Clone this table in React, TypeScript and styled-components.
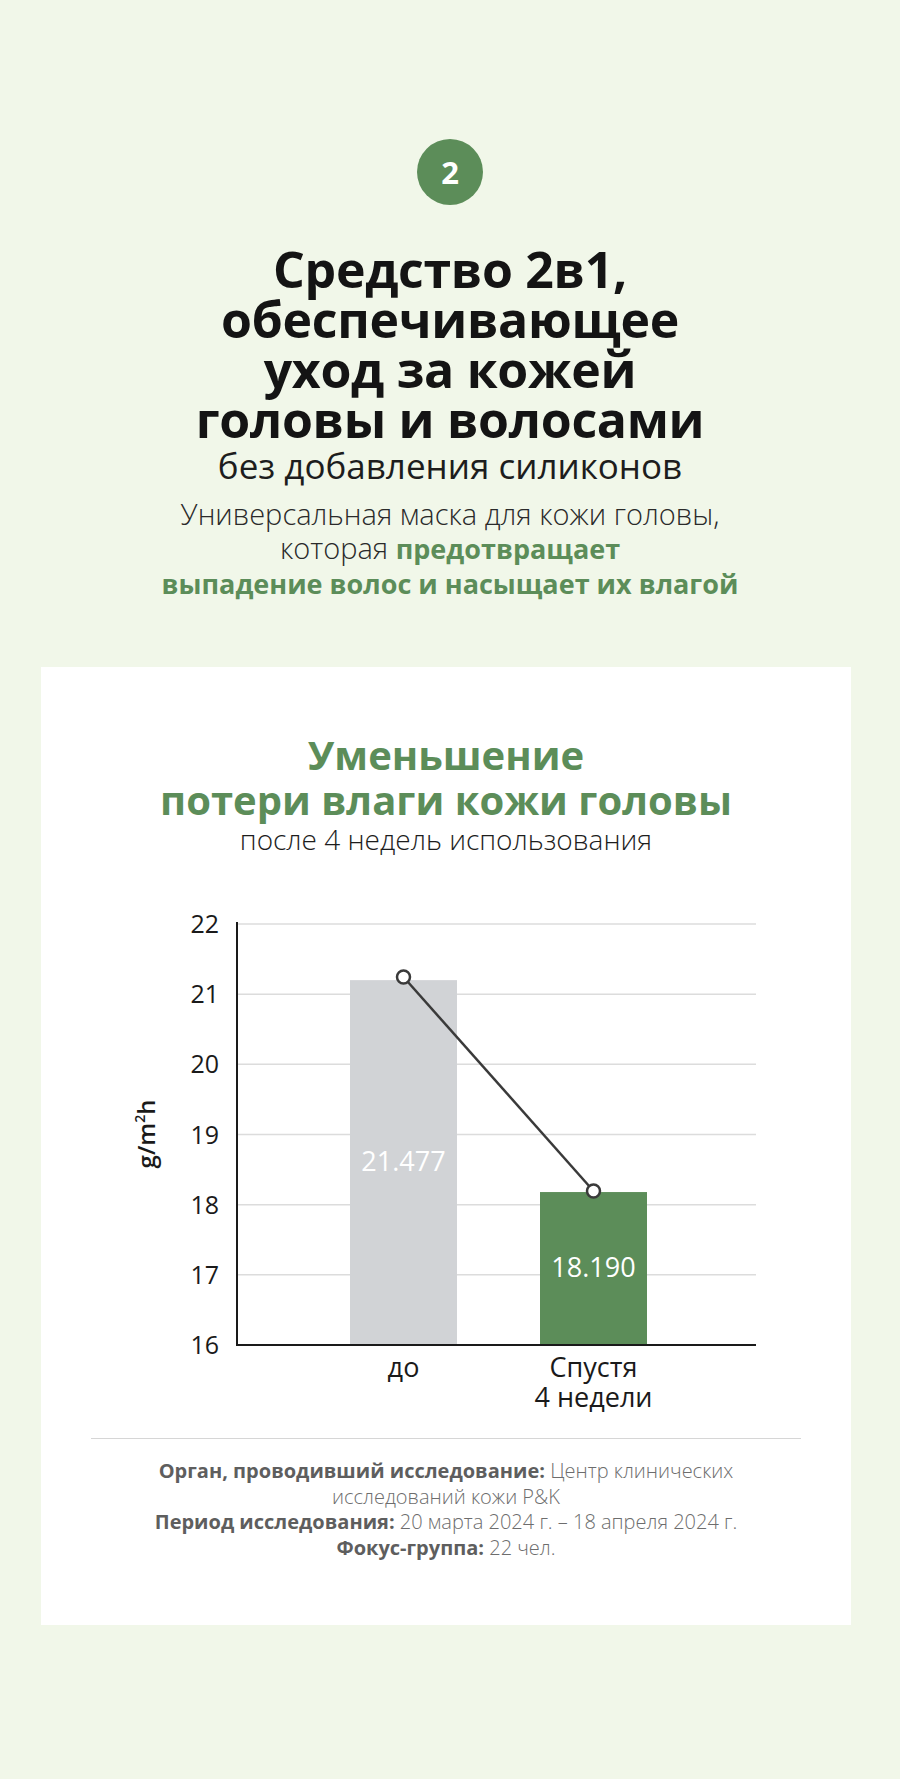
import styled, { createGlobalStyle } from "styled-components";

const GREEN = "#5c8d59";

const GlobalStyle = createGlobalStyle`
  html, body {
    margin: 0;
    padding: 0;
    background: #f1f7e9;
  }
  body {
    font-family: "Open Sans", "Noto Sans", sans-serif;
  }
`;

const Page = styled.div`
  width: 900px;
  min-height: 1779px;
  background: #f1f7e9;
  padding-top: 139px;
  box-sizing: border-box;
  display: flex;
  flex-direction: column;
`;

const Intro = styled.section`
  display: flex;
  flex-direction: column;
  align-items: center;
  text-align: center;
`;

const StepBadge = styled.div`
  width: 66px;
  height: 66px;
  border-radius: 50%;
  background: ${GREEN};
  color: #fff;
  font-weight: 700;
  font-size: 31px;
  display: flex;
  align-items: center;
  justify-content: center;
`;

const Title = styled.h1`
  margin: 39px 0 0;
  font-size: 50px;
  line-height: 50px;
  font-weight: 700;
  letter-spacing: -0.3px;
  color: #141414;
`;

const SubTitle = styled.div`
  margin-top: 2px;
  font-size: 35px;
  line-height: 40px;
  color: #1d1d1d;
`;

const Lead = styled.p`
  margin: 11px 0 0;
  font-size: 29px;
  line-height: 34px;
  font-weight: 300;
  color: #2a2a2a;
`;

const Accent = styled.b`
  font-size: 27px;
  color: ${GREEN};
  font-weight: 700;
`;

const Card = styled.section`
  margin: 66px 0 0 41px;
  width: 810px;
  background: #fff;
  padding: 65px 50px 64px;
  box-sizing: border-box;
  display: flex;
  flex-direction: column;
  align-items: center;
  text-align: center;
`;

const CardTitle = styled.h2`
  margin: 0;
  font-size: 40px;
  line-height: 45px;
  font-weight: 700;
  color: ${GREEN};
`;

const CardSub = styled.div`
  font-size: 28px;
  line-height: 34px;
  font-weight: 300;
  color: #1d1d1d;
`;

const Chart = styled.svg`
  display: block;
  margin-top: 43px;
  font-family: "Open Sans", "Noto Sans", sans-serif;
`;

const Divider = styled.hr`
  width: 100%;
  margin: 24px 0 0;
  border: none;
  border-top: 1.5px solid #d6d6d6;
`;

const Notes = styled.div`
  margin-top: 19px;
  font-size: 20px;
  line-height: 25.7px;
  font-weight: 300;
  color: #6d6d6d;
`;

const NoteKey = styled.b`
  font-weight: 700;
  color: #5e5e5e;
`;

const ticks = [22, 21, 20, 19, 18, 17, 16];
const TOP = 25;
const UNIT = 70.17;
const yOf = (v: number) => TOP + (22 - v) * UNIT;

const bars = [
  { x: 259, value: 21.2, label: "21.477", color: "#d1d3d6", labelY: 262 },
  { x: 449, value: 18.18, label: "18.190", color: GREEN, labelY: 368 },
];
const BAR_W = 107;

const MoistureChart = () => (
  <Chart width={710} height={515} viewBox="0 0 710 515">
    {ticks.map((t) => (
      <g key={t}>
        {t !== 16 && (
          <line x1={146} x2={665} y1={yOf(t)} y2={yOf(t)} stroke="#dcdcdc" strokeWidth={1.5} />
        )}
        <text x={128} y={yOf(t) + 9} textAnchor="end" fontSize={25} fill="#1a1a1a">
          {t}
        </text>
      </g>
    ))}
    {bars.map((b) => (
      <rect key={b.label} x={b.x} y={yOf(b.value)} width={BAR_W} height={yOf(16) - yOf(b.value)} fill={b.color} />
    ))}
    <line x1={146} y1={TOP - 2} x2={146} y2={yOf(16)} stroke="#1a1a1a" strokeWidth={2} />
    <line x1={145} y1={yOf(16)} x2={665} y2={yOf(16)} stroke="#1a1a1a" strokeWidth={2} />
    {bars.map((b) => (
      <text key={b.label} x={b.x + BAR_W / 2} y={b.labelY + 10} textAnchor="middle" fontSize={27} fill="#fff">
        {b.label}
      </text>
    ))}
    <line x1={312.5} y1={78} x2={502.5} y2={292} stroke="#3a3a3a" strokeWidth={2.5} />
    <circle cx={312.5} cy={78} r={6.5} fill="#fff" stroke="#3a3a3a" strokeWidth={2.5} />
    <circle cx={502.5} cy={292} r={6.5} fill="#fff" stroke="#3a3a3a" strokeWidth={2.5} />
    <text x={312.5} y={478} textAnchor="middle" fontSize={27} fill="#1a1a1a">
      до
    </text>
    <text x={502.5} y={478} textAnchor="middle" fontSize={27} fill="#1a1a1a">
      Спустя
    </text>
    <text x={502.5} y={508} textAnchor="middle" fontSize={27} fill="#1a1a1a">
      4 недели
    </text>
    <text
      transform="translate(64 235) rotate(-90)"
      textAnchor="middle"
      fontSize={24}
      fontWeight={600}
      fill="#1a1a1a"
    >
      g/m
      <tspan dy={-10} fontSize={14}>
        2
      </tspan>
      <tspan dy={10}>h</tspan>
    </text>
  </Chart>
);

export default function App() {
  return (
    <>
      <GlobalStyle />
      <Page>
        <Intro>
          <StepBadge>2</StepBadge>
          <Title>
            Средство 2в1,
            <br />
            обеспечивающее
            <br />
            уход за кожей
            <br />
            головы и волосами
          </Title>
          <SubTitle>без добавления силиконов</SubTitle>
          <Lead>
            Универсальная маска для кожи головы,
            <br />
            которая <Accent>предотвращает</Accent>
            <br />
            <Accent>выпадение волос и насыщает их влагой</Accent>
          </Lead>
        </Intro>
        <Card>
          <CardTitle>
            Уменьшение
            <br />
            потери влаги кожи головы
          </CardTitle>
          <CardSub>после 4 недель использования</CardSub>
          <MoistureChart />
          <Divider />
          <Notes>
            <NoteKey>Орган, проводивший исследование:</NoteKey> Центр клинических
            <br />
            исследований кожи P&amp;K
            <br />
            <NoteKey>Период исследования:</NoteKey> 20 марта 2024 г. – 18 апреля 2024 г.
            <br />
            <NoteKey>Фокус-группа:</NoteKey> 22 чел.
          </Notes>
        </Card>
      </Page>
    </>
  );
}
